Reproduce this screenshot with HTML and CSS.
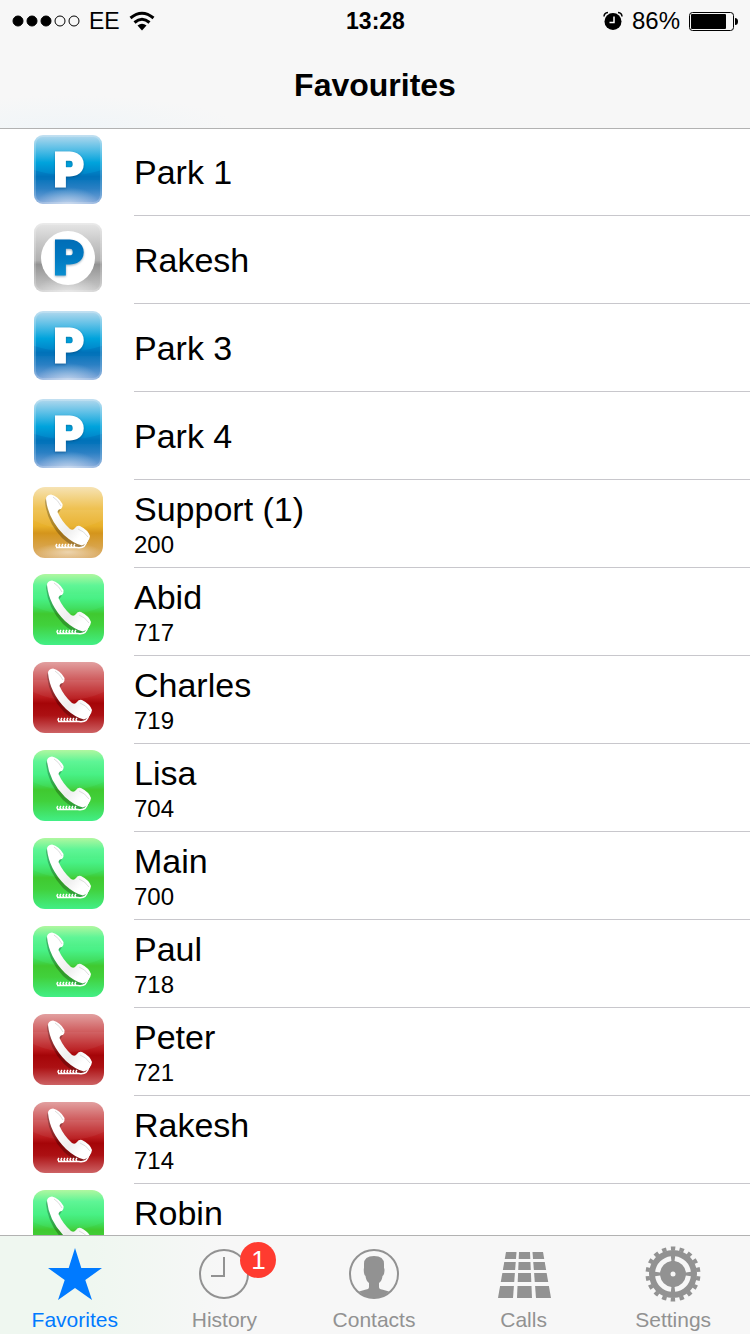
FILE: index.html
```html
<!DOCTYPE html>
<html lang="en">
<head>
    <meta charset="UTF-8">
    <meta name="viewport" content="width=device-width, initial-scale=1.0">
    <title>Favourites</title>
    <link rel="stylesheet" href="styles.css">
</head>
<body>
    <!-- shared icons -->
    <svg class="defs" width="0" height="0" aria-hidden="true">
        <defs>
            <linearGradient id="blue" x1="0" y1="0" x2="0" y2="1">
                <stop offset="0" stop-color="#b5d9ee"/>
                <stop offset="0.2" stop-color="#5bbfe6"/>
                <stop offset="0.4" stop-color="#00a3dc"/>
                <stop offset="0.55" stop-color="#0088cb"/>
                <stop offset="0.6" stop-color="#0072b9"/>
                <stop offset="0.78" stop-color="#2b80c4"/>
                <stop offset="1" stop-color="#84a8da"/>
            </linearGradient>
            <linearGradient id="silver" x1="0" y1="0" x2="0" y2="1">
                <stop offset="0" stop-color="#e6e6e6"/>
                <stop offset="0.3" stop-color="#c6c6c6"/>
                <stop offset="0.54" stop-color="#b0b0b0"/>
                <stop offset="0.6" stop-color="#929292"/>
                <stop offset="0.8" stop-color="#b0b0b0"/>
                <stop offset="1" stop-color="#cccccc"/>
            </linearGradient>
            <linearGradient id="letter" x1="0" y1="0" x2="0" y2="1">
                <stop offset="0" stop-color="#0067b2"/>
                <stop offset="0.5" stop-color="#0079c1"/>
                <stop offset="1" stop-color="#0f9ad8"/>
            </linearGradient>
            <linearGradient id="orange" x1="0" y1="0" x2="0" y2="1">
                <stop offset="0" stop-color="#f6e3b4"/>
                <stop offset="0.3" stop-color="#efc253"/>
                <stop offset="0.55" stop-color="#e8b02a"/>
                <stop offset="0.65" stop-color="#d4951c"/>
                <stop offset="1" stop-color="#dcb070"/>
            </linearGradient>
            <linearGradient id="green" x1="0" y1="0" x2="0" y2="1">
                <stop offset="0" stop-color="#b0f7a0"/>
                <stop offset="0.16" stop-color="#5ff596"/>
                <stop offset="0.35" stop-color="#46ee80"/>
                <stop offset="0.48" stop-color="#3edb58"/>
                <stop offset="0.56" stop-color="#40c930"/>
                <stop offset="0.72" stop-color="#41d13c"/>
                <stop offset="1" stop-color="#42ef86"/>
            </linearGradient>
            <linearGradient id="red" x1="0" y1="0" x2="0" y2="1">
                <stop offset="0" stop-color="#e2a0a0"/>
                <stop offset="0.3" stop-color="#cb4e50"/>
                <stop offset="0.5" stop-color="#b9191c"/>
                <stop offset="0.58" stop-color="#a50508"/>
                <stop offset="0.75" stop-color="#ac1013"/>
                <stop offset="1" stop-color="#cd6264"/>
            </linearGradient>
            <linearGradient id="handset" x1="0" y1="0" x2="1" y2="1">
                <stop offset="0.3" stop-color="#ffffff"/>
                <stop offset="0.6" stop-color="#eeeeee"/>
                <stop offset="0.8" stop-color="#ffffff"/>
            </linearGradient>
            <radialGradient id="glow">
                <stop offset="0" stop-color="#ffffff" stop-opacity="0.5"/>
                <stop offset="1" stop-color="#ffffff" stop-opacity="0"/>
            </radialGradient>
            <clipPath id="tile"><rect x="2" y="1" width="68" height="69" rx="9"/></clipPath>
            <clipPath id="keyrows">
                <path d="M0 6h56v7H0zM0 16h56v8H0zM0 27h56v9H0zM0 40h56v12H0z"/>
            </clipPath>
        </defs>
        <symbol id="park" viewBox="0 0 72 72">
            <g clip-path="url(#tile)">
                <rect x="2" y="1" width="68" height="69" fill="url(#blue)"/>
                <path d="M2 36Q36 47 70 36V46H2z" fill="#0072b9" opacity="0.5"/>
                <ellipse cx="36" cy="71" rx="32" ry="18" fill="url(#glow)"/>
            </g>
            <rect x="3" y="2" width="66" height="67" rx="8" fill="none" stroke="#fff" stroke-opacity="0.2" stroke-width="2"/>
        </symbol>
        <symbol id="park-free" viewBox="0 0 72 72">
            <g clip-path="url(#tile)">
                <rect x="2" y="1" width="68" height="69" fill="url(#silver)"/>
                <ellipse cx="36" cy="71" rx="32" ry="18" fill="url(#glow)"/>
            </g>
            <rect x="3" y="2" width="66" height="67" rx="8" fill="none" stroke="#fff" stroke-opacity="0.2" stroke-width="2"/>
            <circle cx="36" cy="36" r="27" fill="#fff"/>
        </symbol>
        <symbol id="phone" viewBox="0 0 72 72">
            <path d="M15 12Q15 7 21 7Q27 8 31 16Q32 20 27 24Q31 34 39 41Q42 42 44 40Q47 37 50 39Q57 43 59 48Q58 56 50 58Q42 57 32 48Q17 32 15 12z" fill="#000" opacity="0.25" transform="translate(-1 2)"/>
            <path d="M15 11Q15 7 20 6.500Q27 8 31.500 16Q32 19 30 21Q27 21 26.500 24Q31 34 39 41Q42 43 44 40Q46 37 49 38Q57 42 59 48Q58 55 51 57.500Q43 56 33 47Q17 31 15 11z" fill="url(#handset)"/>
            <path d="M22 9Q27 12 30 18M47 41Q53 43 57 49" fill="none" stroke="#ddd" stroke-width="1"/>
            <path d="M26 56Q24 58 26 59M29 56Q27 58 29 59M32 56Q30 58 32 59M35 56Q33 58 35 59M38 56Q36 58 38 59M41 56Q39 58 41 59M44 56Q42 58 44 59" fill="none" stroke="#fff" stroke-width="1.500"/>
            <path d="M25 59.500H46Q54 61 56 53" fill="none" stroke="#fff" stroke-width="1.300"/>
        </symbol>
        <symbol id="call-orange" viewBox="0 0 72 72">
            <rect x="1" y="1" width="70" height="71" rx="12" fill="url(#orange)"/>
            <path d="M1 34Q36 52 71 34V24H1z" fill="#fff" opacity="0.05"/>
            <ellipse cx="36" cy="66" rx="34" ry="9" fill="url(#glow)"/>
            <use href="#phone" x="-1" y="2" width="72" height="72"/>
        </symbol>
        <symbol id="call-green" viewBox="0 0 72 72">
            <rect x="1" y="0" width="71" height="71" rx="12" fill="url(#green)"/>
            <path d="M1 32Q36 48 72 32V20H1z" fill="#5effa8" opacity="0.12"/>
            <use href="#phone" width="72" height="72"/>
        </symbol>
        <symbol id="call-red" viewBox="0 0 72 72">
            <rect x="1" y="0" width="71" height="71" rx="12" fill="url(#red)"/>
            <path d="M1 30Q36 46 72 30V18H1z" fill="#fff" opacity="0.05"/>
            <use href="#phone" x="1" width="72" height="72"/>
        </symbol>
    </svg>

    <header class="header">
        <div class="status">
            <div class="status-left">
                <svg width="68" height="12" viewBox="0 0 68 12" aria-hidden="true">
                    <g stroke="#000" stroke-width="1">
                        <circle cx="6" cy="6" r="5"/>
                        <circle cx="20" cy="6" r="5"/>
                        <circle cx="34" cy="6" r="5"/>
                        <circle cx="48" cy="6" r="5" fill="none"/>
                        <circle cx="62" cy="6" r="5" fill="none"/>
                    </g>
                </svg>
                <span class="carrier">EE</span>
                <svg width="26" height="20" viewBox="0 0 26 20" aria-hidden="true">
                    <g fill="none" stroke="#000" stroke-width="3">
                        <path d="M1.500 7Q13 -2.500 24.500 7"/>
                        <path d="M5.500 11.500Q13 5 20.500 11.500"/>
                    </g>
                    <path d="M8.500 14.500Q13 11 17.500 14.500L13 19.500z"/>
                </svg>
            </div>
            <time class="clock">13:28</time>
            <div class="status-right">
                <svg width="20" height="20" viewBox="0 0 20 20" aria-hidden="true">
                    <circle cx="10" cy="10.500" r="8.500"/>
                    <path d="M1 5.500Q1 2 5 1.500M19 5.500Q19 2 15 1.500" fill="none" stroke="#000" stroke-width="1.500"/>
                    <path d="M11 5.500V11.500H6.500" fill="none" stroke="#fff" stroke-width="1.500"/>
                </svg>
                <span>86%</span>
                <svg width="50" height="20" viewBox="0 0 50 20" aria-hidden="true">
                    <rect x="0.500" y="1.500" width="44" height="18" rx="3" fill="none" stroke="#000"/>
                    <rect x="2" y="3" width="35" height="15" rx="1"/>
                    <path d="M46 7Q49 7 49 10.500Q49 14 46 14z"/>
                </svg>
            </div>
        </div>
        <h1 class="title">Favourites</h1>
    </header>

    <main class="content">
        <ul class="list">
            <li><a class="row" href="#"><svg class="icon" viewBox="0 0 72 72"><use href="#park"/><text class="letter" x="22" y="52">P</text></svg><span class="info"><span class="name">Park 1</span></span></a></li>
            <li><a class="row" href="#"><svg class="icon" viewBox="0 0 72 72"><use href="#park-free"/><text class="letter free" x="22" y="52">P</text></svg><span class="info"><span class="name">Rakesh</span></span></a></li>
            <li><a class="row" href="#"><svg class="icon" viewBox="0 0 72 72"><use href="#park"/><text class="letter" x="22" y="52">P</text></svg><span class="info"><span class="name">Park 3</span></span></a></li>
            <li><a class="row" href="#"><svg class="icon" viewBox="0 0 72 72"><use href="#park"/><text class="letter" x="22" y="52">P</text></svg><span class="info"><span class="name">Park 4</span></span></a></li>
            <li><a class="row" href="#"><svg class="icon"><use href="#call-orange"/></svg><span class="info"><span class="name">Support (1)</span><span class="number">200</span></span></a></li>
            <li><a class="row" href="#"><svg class="icon"><use href="#call-green"/></svg><span class="info"><span class="name">Abid</span><span class="number">717</span></span></a></li>
            <li><a class="row" href="#"><svg class="icon"><use href="#call-red"/></svg><span class="info"><span class="name">Charles</span><span class="number">719</span></span></a></li>
            <li><a class="row" href="#"><svg class="icon"><use href="#call-green"/></svg><span class="info"><span class="name">Lisa</span><span class="number">704</span></span></a></li>
            <li><a class="row" href="#"><svg class="icon"><use href="#call-green"/></svg><span class="info"><span class="name">Main</span><span class="number">700</span></span></a></li>
            <li><a class="row" href="#"><svg class="icon"><use href="#call-green"/></svg><span class="info"><span class="name">Paul</span><span class="number">718</span></span></a></li>
            <li><a class="row" href="#"><svg class="icon"><use href="#call-red"/></svg><span class="info"><span class="name">Peter</span><span class="number">721</span></span></a></li>
            <li><a class="row" href="#"><svg class="icon"><use href="#call-red"/></svg><span class="info"><span class="name">Rakesh</span><span class="number">714</span></span></a></li>
            <li><a class="row" href="#"><svg class="icon"><use href="#call-green"/></svg><span class="info"><span class="name">Robin</span><span class="number"></span></span></a></li>
        </ul>
    </main>

    <nav class="tabs">
        <a class="tab active" href="#">
            <svg class="tab-icon" viewBox="0 0 56 56" aria-hidden="true">
                <path d="M28 2L34.300 22H55L38.300 34L45 54L28 42L11 54L17.700 34L1 22H21.700z" fill="currentColor"/>
            </svg>
            <span>Favorites</span>
        </a>
        <a class="tab" href="#">
            <span class="badge-wrap">
                <svg class="tab-icon" viewBox="0 0 56 56" aria-hidden="true">
                    <g fill="none" stroke="currentColor" stroke-width="2">
                        <circle cx="28" cy="28" r="24"/>
                        <path d="M28 11V30H15"/>
                    </g>
                </svg>
                <span class="badge">1</span>
            </span>
            <span>History</span>
        </a>
        <a class="tab" href="#">
            <svg class="tab-icon" viewBox="0 0 56 56" aria-hidden="true">
                <circle cx="28" cy="28" r="24" fill="none" stroke="currentColor" stroke-width="2"/>
                <path d="M28 10Q38 10 38 18V22Q39 23 38 28Q37 30 36.500 30Q36 35 33 37V41Q33 43 36 43.500L43 45.500Q37 52 28 52Q19 52 13 45.500L20 43.500Q23 43 23 41V37Q20 35 19.500 30Q18.500 30 18 27Q17.500 23 18 22V18Q18 10 28 10z" fill="currentColor"/>
            </svg>
            <span>Contacts</span>
        </a>
        <a class="tab" href="#">
            <svg class="tab-icon" viewBox="0 0 56 56" aria-hidden="true">
                <g clip-path="url(#keyrows)" fill="currentColor">
                    <path d="M10 6H20.500L17 52H2z"/>
                    <path d="M23 6H34L36 52H21z"/>
                    <path d="M36.500 6H47L55 52H40z"/>
                </g>
            </svg>
            <span>Calls</span>
        </a>
        <a class="tab" href="#">
            <svg class="tab-icon" viewBox="0 0 56 56" aria-hidden="true">
                <circle cx="28" cy="28" r="24" fill="currentColor"/>
                <circle cx="28" cy="28" r="25.500" fill="none" stroke="currentColor" stroke-width="4" pathLength="36" stroke-dasharray="1 1" transform="rotate(5 28 28)"/>
                <circle cx="28" cy="28" r="15.500" fill="none" stroke="#f7f7f7" stroke-width="5" pathLength="40" stroke-dasharray="8.400 1.600" stroke-dashoffset="-0.800"/>
                <circle cx="28" cy="28" r="2.500" fill="#f7f7f7"/>
            </svg>
            <span>Settings</span>
        </a>
    </nav>
</body>
</html>
```
FILE: styles.css
```css
* {
    box-sizing: border-box;
}
body {
    font-family: "Liberation Sans", Arial, sans-serif;
    background: #fff;
    color: #000;
    margin: 0;
    height: 100vh;
    display: flex;
    flex-direction: column;
    overflow: hidden;
}
a {
    color: inherit;
    text-decoration: none;
}
svg {
    flex-shrink: 0;
}
.defs {
    position: absolute;
}
.header {
    height: 128px;
    flex-shrink: 0;
    display: flex;
    flex-direction: column;
    background: radial-gradient(ellipse at 9% 100%, #f0f5f8 0, #f7f7f7 18%);
    box-shadow: 0 1px 0 #b2b2b2;
    z-index: 1;
}
.status {
    height: 42px;
    padding: 0 11px 0 12px;
    display: grid;
    grid-template-columns: 1fr auto 1fr;
    align-items: center;
    font-size: 24px;
}
.status-left, .status-right {
    display: flex;
    align-items: center;
    gap: 9px;
}
.carrier {
    font-size: 23px;
}
.status-right {
    justify-content: flex-end;
}
.clock {
    font-size: 23px;
    font-weight: bold;
}
.title {
    flex: 1;
    margin: 0;
    display: flex;
    align-items: center;
    justify-content: center;
    font-size: 32px;
}
.content {
    flex: 1;
    min-height: 0;
    overflow-y: auto;
    scrollbar-width: none;
}
.list {
    list-style: none;
    margin: 0;
    padding: 0;
}
.row {
    display: flex;
    height: 88px;
    padding-left: 32px;
    gap: 30px;
}
.icon {
    width: 72px;
    height: 72px;
    margin-top: 6px;
}
.letter {
    font-family: Roboto, sans-serif;
    font-weight: 900;
    font-size: 46px;
    fill: #fff;
    stroke: #fff;
    stroke-width: 3px;
    filter: drop-shadow(0 1px 1px rgba(0, 50, 90, 0.4));
}
.letter.free {
    fill: url(#letter);
    stroke: url(#letter);
}
.info {
    flex: 1;
    display: flex;
    flex-direction: column;
    justify-content: center;
    gap: 2px;
    border-bottom: 1px solid #c8c7cc;
}
.name {
    font-size: 34px;
    line-height: 40px;
}
.number {
    font-size: 24px;
    line-height: 28px;
    min-height: 28px;
}
.tabs {
    height: 99px;
    flex-shrink: 0;
    display: flex;
    padding-right: 2px;
    border-top: 1px solid #b2b2b2;
    background: linear-gradient(to right, #eff7f0 0, #eff7f0 12%, #f7f7f7 30%);
    color: #929292;
}
.tab {
    flex: 1;
    display: flex;
    flex-direction: column;
    align-items: center;
    gap: 6px;
    padding-top: 10px;
    font-size: 21px;
    line-height: 24px;
}
.tab.active {
    color: #007aff;
}
.tab-icon {
    display: block;
    width: 56px;
    height: 56px;
}
.badge-wrap {
    position: relative;
}
.badge {
    position: absolute;
    top: -4px;
    right: -24px;
    width: 36px;
    height: 36px;
    border-radius: 50%;
    background: #ff3b30;
    color: #fff;
    font-size: 26px;
    line-height: 36px;
    text-align: center;
}
```
